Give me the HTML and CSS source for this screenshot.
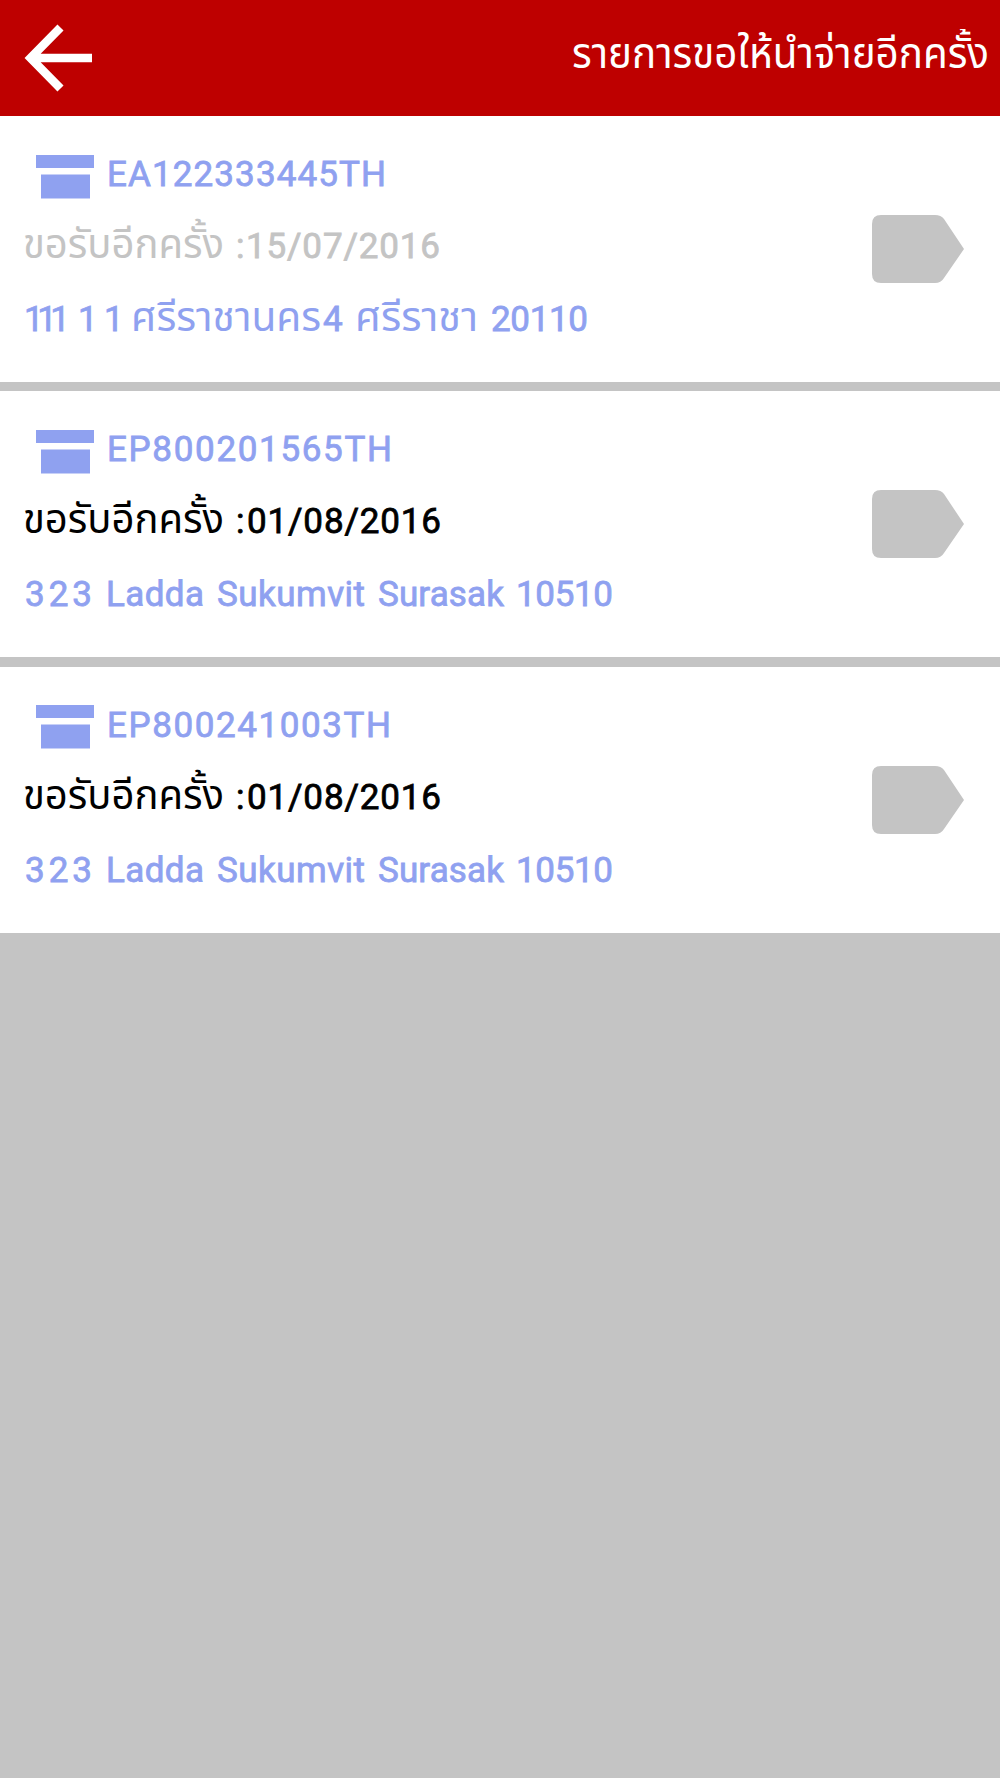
FILE: index.html
```
<!DOCTYPE html>
<html lang="th">
<head>
<meta charset="utf-8">
<title>รายการขอให้นำจ่ายอีกครั้ง</title>
<link rel="stylesheet" href="styles.css">
</head>
<body>
<header class="bar">
  <svg class="back" viewBox="0 0 68 68"><path d="M36.500 3.500 6.500 34l30 30.500M8 34h60"/></svg>
  <h1 class="title"><svg class="title-text" width="420" height="60"><text x="2" y="39" textLength="417" lengthAdjust="spacingAndGlyphs">รายการขอให้นำจ่ายอีกครั้ง</text></svg></h1>
</header>
<main class="list">
  <article class="card">
    <div class="info">
      <div class="code">
        <svg class="box" viewBox="0 0 58 44"><path d="M0 0h58v13H0zM5 19.500h49v24H5z"/></svg>
        <svg class="line" width="300" height="72"><text x="0" y="48" textLength="279">EA122333445TH</text></svg>
      </div>
      <svg class="line muted" width="600" height="72"><text class="thai" x="-1" y="48" textLength="201" lengthAdjust="spacingAndGlyphs">ขอรับอีกครั้ง</text><text x="212" y="48">:</text><text x="222" y="48" textLength="194">15/07/2016</text></svg>
      <svg class="line" width="700" height="72"><text x="0" y="49" textLength="46">111</text><text x="54" y="49">1</text><text x="80" y="49">1</text><text class="thai" x="107" y="49" textLength="190" lengthAdjust="spacingAndGlyphs">ศรีราชานคร</text><text x="299" y="49">4</text><text class="thai" x="331" y="49" textLength="123" lengthAdjust="spacingAndGlyphs">ศรีราชา</text><text x="467" y="49" textLength="97">20110</text></svg>
    </div>
    <svg class="tag" viewBox="0 0 92 68"><path d="M9 0h54q6 0 9 4l20 30-20 29q-3 5-9 5H9q-9 0-9-9V9q0-9 9-9z"/></svg>
  </article>
  <article class="card">
    <div class="info">
      <div class="code">
        <svg class="box" viewBox="0 0 58 44"><path d="M0 0h58v13H0zM5 19.500h49v24H5z"/></svg>
        <svg class="line" width="300" height="72"><text x="0" y="48" textLength="285">EP800201565TH</text></svg>
      </div>
      <svg class="line strong" width="600" height="72"><text class="thai" x="-1" y="48" textLength="201" lengthAdjust="spacingAndGlyphs">ขอรับอีกครั้ง</text><text x="212" y="48">:</text><text x="223" y="48" textLength="194">01/08/2016</text></svg>
      <svg class="line" width="700" height="72"><text x="1" y="49" textLength="67">323</text><text x="82" y="49" textLength="98">Ladda</text><text x="193" y="49" textLength="148">Sukumvit</text><text x="354" y="49" textLength="126">Surasak</text><text x="492" y="49" textLength="97">10510</text></svg>
    </div>
    <svg class="tag" viewBox="0 0 92 68"><path d="M9 0h54q6 0 9 4l20 30-20 29q-3 5-9 5H9q-9 0-9-9V9q0-9 9-9z"/></svg>
  </article>
  <article class="card">
    <div class="info">
      <div class="code">
        <svg class="box" viewBox="0 0 58 44"><path d="M0 0h58v13H0zM5 19.500h49v24H5z"/></svg>
        <svg class="line" width="300" height="72"><text x="0" y="48" textLength="284">EP800241003TH</text></svg>
      </div>
      <svg class="line strong" width="600" height="72"><text class="thai" x="-1" y="48" textLength="201" lengthAdjust="spacingAndGlyphs">ขอรับอีกครั้ง</text><text x="212" y="48">:</text><text x="223" y="48" textLength="194">01/08/2016</text></svg>
      <svg class="line" width="700" height="72"><text x="1" y="49" textLength="67">323</text><text x="82" y="49" textLength="98">Ladda</text><text x="193" y="49" textLength="148">Sukumvit</text><text x="354" y="49" textLength="126">Surasak</text><text x="492" y="49" textLength="97">10510</text></svg>
    </div>
    <svg class="tag" viewBox="0 0 92 68"><path d="M9 0h54q6 0 9 4l20 30-20 29q-3 5-9 5H9q-9 0-9-9V9q0-9 9-9z"/></svg>
  </article>
</main>
</body>
</html>
```
FILE: styles.css
```
body {
  margin: 0;
  background: #c4c4c4;
  font-family: Roboto, "Noto Sans Thai", "Noto Sans", sans-serif;
}
svg { display: block; flex: none; }
.bar {
  display: flex;
  justify-content: space-between;
  height: 116px;
  background: #be0000;
}
.back {
  width: 68px;
  height: 68px;
  margin: 24px;
  fill: none;
  stroke: #fff;
  stroke-width: 8.500;
}
.title {
  margin: 29px 10px 0 0;
  font-size: 42px;
  font-weight: 400;
}
/* Tall tone marks are cut at the top edge of the title box. */
.title-text { fill: #fff; overflow: hidden; }
.list {
  display: grid;
  gap: 9.500px;
}
.card {
  display: flex;
  justify-content: space-between;
  box-sizing: border-box;
  height: 265.900px;
  padding: 22px 36px 0 24px;
  background: #fff;
}
.code { display: flex; }
.box {
  width: 58px;
  height: 44px;
  margin: 16.500px 13px 0 12px;
  fill: #8fa1f0;
}
.line {
  overflow: visible;
  fill: #8fa1f0;
  stroke: #8fa1f0;
  stroke-width: 0.800px;
  font-size: 35px;
  font-weight: 400;
}
.thai { font-size: 41px; stroke: none; }
.muted { fill: #c4c4c4; stroke: #c4c4c4; }
.strong { fill: #000; stroke: #000; }
.tag {
  width: 92px;
  height: 68px;
  margin-top: 77px;
  fill: #c4c4c4;
}
```
